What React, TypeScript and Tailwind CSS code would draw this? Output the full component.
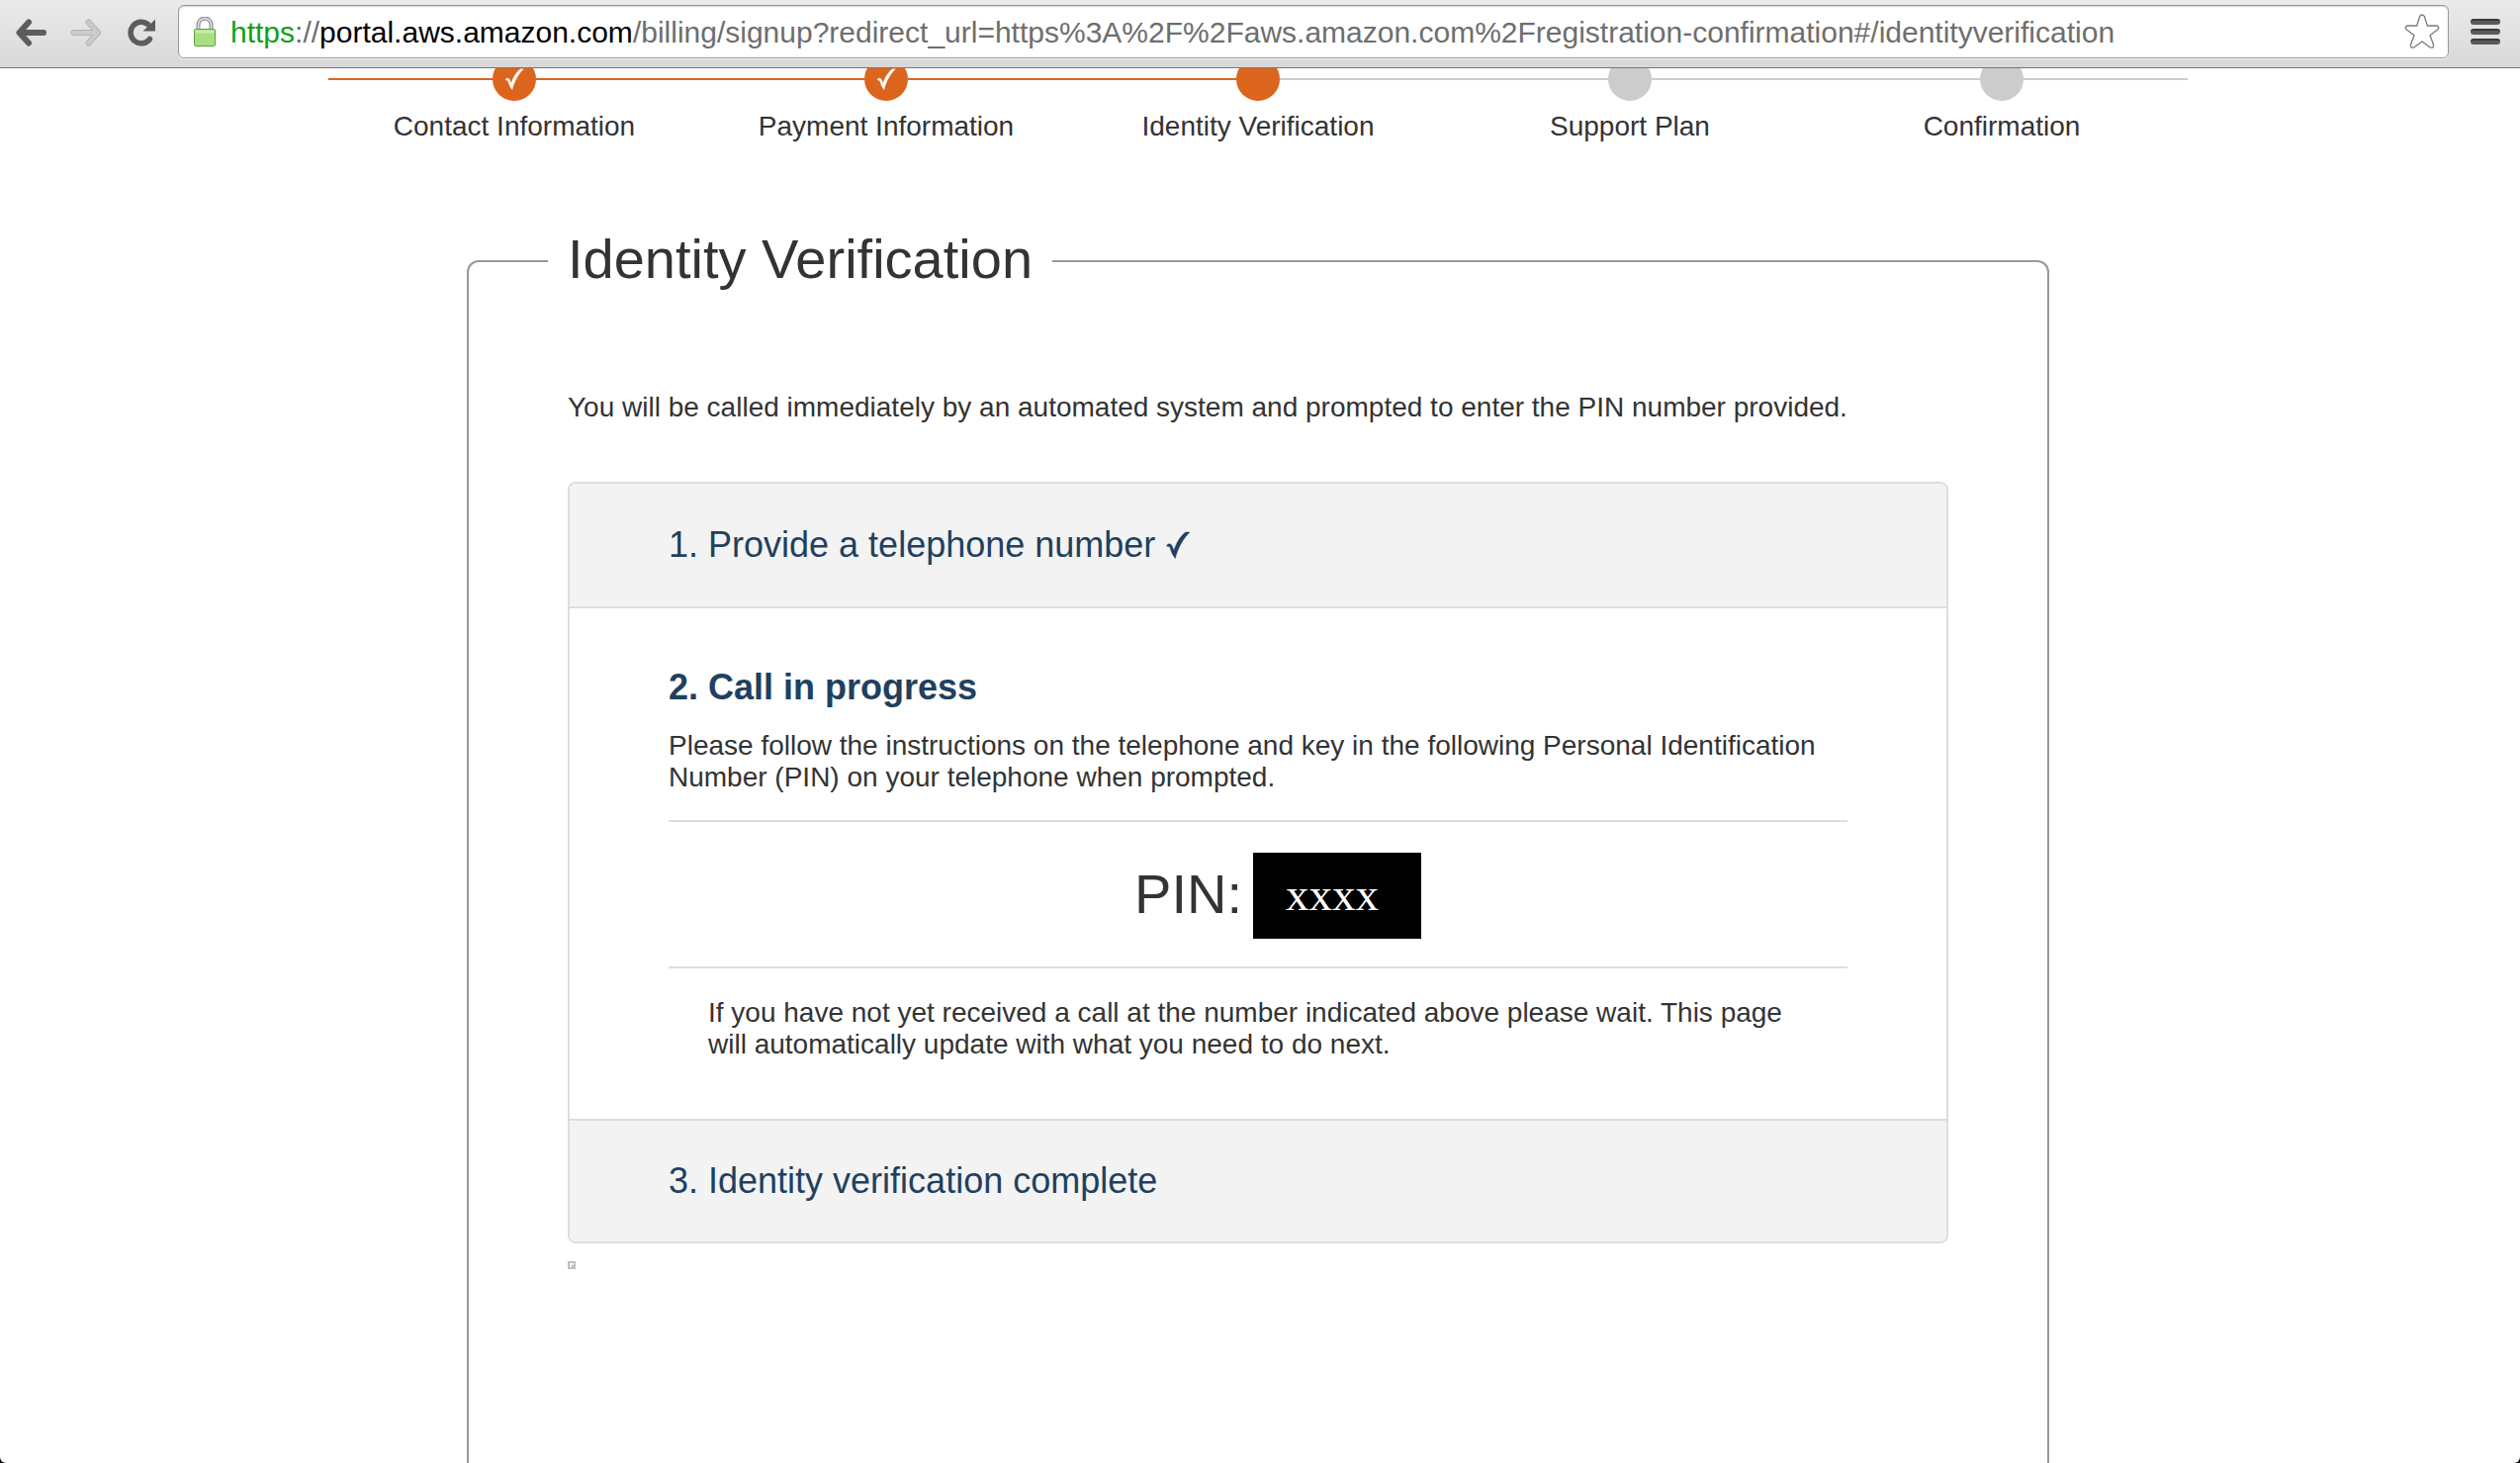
import React from "react";

type StepState = "done" | "current" | "todo";

const steps: { label: string; state: StepState }[] = [
  { label: "Contact Information", state: "done" },
  { label: "Payment Information", state: "done" },
  { label: "Identity Verification", state: "current" },
  { label: "Support Plan", state: "todo" },
  { label: "Confirmation", state: "todo" },
];

function Check({ className }: { className: string }) {
  return (
    <svg viewBox="0 0 24 28" className={className} fill="currentColor" stroke="currentColor" strokeWidth="0.400" strokeLinejoin="round" aria-hidden="true">
      <path d="M0.6 15.2 C1.2 12.6 4.4 12 5.6 14 C6.6 15.6 7.4 17.6 8 19.6 C10.4 11.600 14.400 5 19.800 1 L24 1 C17.500 7 12.200 16.500 9.300 27.600 C6.800 24.400 5 20.400 4 16.400 C3.200 15.400 1.800 15.400 0.600 15.200 Z" />
    </svg>
  );
}

function Toolbar() {
  return (
    <header className="relative z-10 flex h-[69px] items-center border-b border-[#767676] bg-linear-to-b from-[#ebebeb] to-[#d8d8d8] pr-5 pl-4">
      <button type="button" aria-label="Back" className="mt-[-3px] h-7 w-8">
        <svg viewBox="0 0 32 28" className="h-7 w-8" fill="none" stroke="#5c5c5c" strokeWidth="6" strokeLinecap="round" strokeLinejoin="round">
          <path d="M13 3.500 L3.500 14 L13 24.500 M4.500 14 H28" />
        </svg>
      </button>
      <button type="button" aria-label="Forward" disabled className="mt-[-3px] ml-[23px] h-7 w-8">
        <svg viewBox="0 0 32 28" className="h-7 w-8" fill="none" strokeLinecap="round" strokeLinejoin="round">
          <path d="M18.500 3.500 L28 14 L18.500 24.500 M27.500 14 H3.500" stroke="#b4b4b4" strokeWidth="6" />
          <path d="M18.500 3.500 L28 14 L18.500 24.500 M27.500 14 H3.500" stroke="#cbcbcb" strokeWidth="4" />
        </svg>
      </button>
      <button type="button" aria-label="Reload" className="mt-[-3px] ml-[26px] h-7 w-8">
        <svg viewBox="0 0 32 28" className="h-7 w-8">
          <path d="M22.500 20.500 A10.800 10.800 0 1 1 20.500 5.500" fill="none" stroke="#5c5c5c" strokeWidth="5.500" strokeLinecap="round" />
          <path d="M28 0.500 V12.500 H15.500 Z" fill="#5c5c5c" />
        </svg>
      </button>
      <div className="mt-[-4px] ml-[19px] flex h-[54px] flex-1 items-center rounded-md border border-[#9a9a9a] bg-white pr-2 pl-[15px] shadow-[inset_0_1px_1px_#d4d4d4,0_1px_0_#f0f0f0]">
        <svg viewBox="0 0 22 30" className="h-[30px] w-[22px] shrink-0" aria-hidden="true">
          <path d="M4.500 13 V8 A6.500 6.500 0 0 1 17.500 8 V13" fill="none" stroke="#8c8c8c" strokeWidth="4" />
          <path d="M4.500 13 V8 A6.500 6.500 0 0 1 17.500 8 V13" fill="none" stroke="#e4e4e4" strokeWidth="1.600" />
          <rect x="0.500" y="12.500" width="21" height="17" rx="1" fill="#a9df83" stroke="#5fa03f" />
          <rect x="1.500" y="13.500" width="19" height="3" fill="#c4f0a0" />
        </svg>
        <p className="mt-[2px] ml-[15px] flex-1 text-[30px] leading-8 whitespace-nowrap text-[#6e6e6e]">
          <span className="text-[#14a014]">https</span>://<span className="text-black">portal.aws.amazon.com</span>
          /billing/signup?redirect_url=https%3A%2F%2Faws.amazon.com%2Fregistration-confirmation#/identityverification
        </p>
        <button type="button" aria-label="Bookmark this page" className="h-9 w-9">
          <svg viewBox="0 0 36 36" className="h-9 w-9" fill="none" stroke="#7a7a7a" strokeWidth="1.300" strokeLinejoin="round">
            <path d="M15.700 2.500 Q18 -0.500 20.300 2.500 L23.300 12 H32.500 Q36.200 13 33.800 15.800 L26 21.800 L29.600 31.500 Q29.800 35 26.300 34 L18 28 L9.700 34 Q6.200 35 6.400 31.500 L10 21.800 L2.200 15.800 Q-0.200 13 3.500 12 H12.700 Z" />
          </svg>
        </button>
      </div>
      <button type="button" aria-label="Menu" className="mt-[-4px] ml-[22px] flex w-[30px] flex-col gap-1">
        <span className="h-[6px] rounded-full border-t-2 border-[#3a3a3a] bg-[#5a5a5a]" />
        <span className="h-[6px] rounded-full border-t-2 border-[#3a3a3a] bg-[#5a5a5a]" />
        <span className="h-[6px] rounded-full border-t-2 border-[#3a3a3a] bg-[#5a5a5a]" />
      </button>
    </header>
  );
}

function Line({ on }: { on: boolean }) {
  return <span className={on ? "h-[2px] flex-1 bg-[#dc651d]" : "h-[2px] flex-1 bg-[#cccccc]"} />;
}

function Steps() {
  return (
    <ol className="mx-auto mt-[-11px] grid w-full max-w-[1880px] grid-cols-5">
      {steps.map((s) => (
        <li key={s.label} className="flex flex-col items-center">
          <div className="flex w-full items-center">
            <Line on={s.state !== "todo"} />
            <span
              className={
                s.state === "todo"
                  ? "flex size-11 items-center justify-center rounded-full bg-[#cccccc]"
                  : "flex size-11 items-center justify-center rounded-full bg-[#dc651d] text-white"
              }
            >
              {s.state === "done" && <Check className="h-[22px] w-5" />}
            </span>
            <Line on={s.state === "done"} />
          </div>
          <span className="mt-[10px] leading-8">{s.label}</span>
        </li>
      ))}
    </ol>
  );
}

export default function App() {
  return (
    <div className="h-screen bg-black font-['Liberation_Sans',Arial,sans-serif] text-[28px] leading-8 text-[#333333]">
      <div className="flex h-full flex-col overflow-hidden rounded-b-md bg-white">
        <Toolbar />
        <main className="flex flex-1 flex-col pr-1">
          <Steps />
          <fieldset className="mx-auto mt-[86px] w-full max-w-[1600px] flex-1 rounded-t-xl border-2 border-b-0 border-[#999999] px-[100px]">
            <legend className="-ml-5 px-5 pb-1 text-[56px] leading-[64px]">Identity Verification</legend>
            <p className="mt-[98px]">
              You will be called immediately by an automated system and prompted to enter the PIN number provided.
            </p>
            <div className="mt-[59px] overflow-hidden rounded-lg border-2 border-[#dddddd]">
              <h2 className="flex items-center bg-[#f3f3f3] px-[100px] py-[41px] text-4xl leading-[42px] text-[#1f4060]">
                1. Provide a telephone number
                <Check className="ml-[11px] h-7 w-6" />
              </h2>
              <section className="border-y-2 border-[#dddddd] px-[100px] pt-[59px] pb-[59px]">
                <h2 className="text-4xl leading-[42px] font-bold text-[#1f4060]">2. Call in progress</h2>
                <p className="mt-[22px]">
                  Please follow the instructions on the telephone and key in the following Personal Identification
                  Number (PIN) on your telephone when prompted.
                </p>
                <div className="mt-[27px] flex items-center justify-center border-y-2 border-[#dddddd] pt-[31px] pb-[28px] pl-10">
                  <span className="pb-1 text-[56px] leading-[64px]">PIN:</span>
                  <span className="ml-[11px] h-[87px] w-[170px] bg-black pl-[33px] font-['Liberation_Serif',serif] text-[47px] leading-[84px] text-white">
                    xxxx
                  </span>
                </div>
                <p className="mt-[29px] px-10">
                  If you have not yet received a call at the number indicated above please wait. This page will
                  automatically update with what you need to do next.
                </p>
              </section>
              <h2 className="bg-[#f3f3f3] px-[100px] py-10 text-4xl leading-[42px] text-[#1f4060]">
                3. Identity verification complete
              </h2>
            </div>
            <svg viewBox="0 0 8 8" className="mt-[18px] size-2" role="img" aria-label="Image not loaded">
              <path d="M1 1 H7 V7 H1 Z" fill="#ffffff" stroke="#bfbfbf" strokeWidth="2" />
              <path d="M4 4 H6 V5 H5 V6 H4 Z" fill="#9c9c9c" />
            </svg>
          </fieldset>
        </main>
      </div>
    </div>
  );
}
